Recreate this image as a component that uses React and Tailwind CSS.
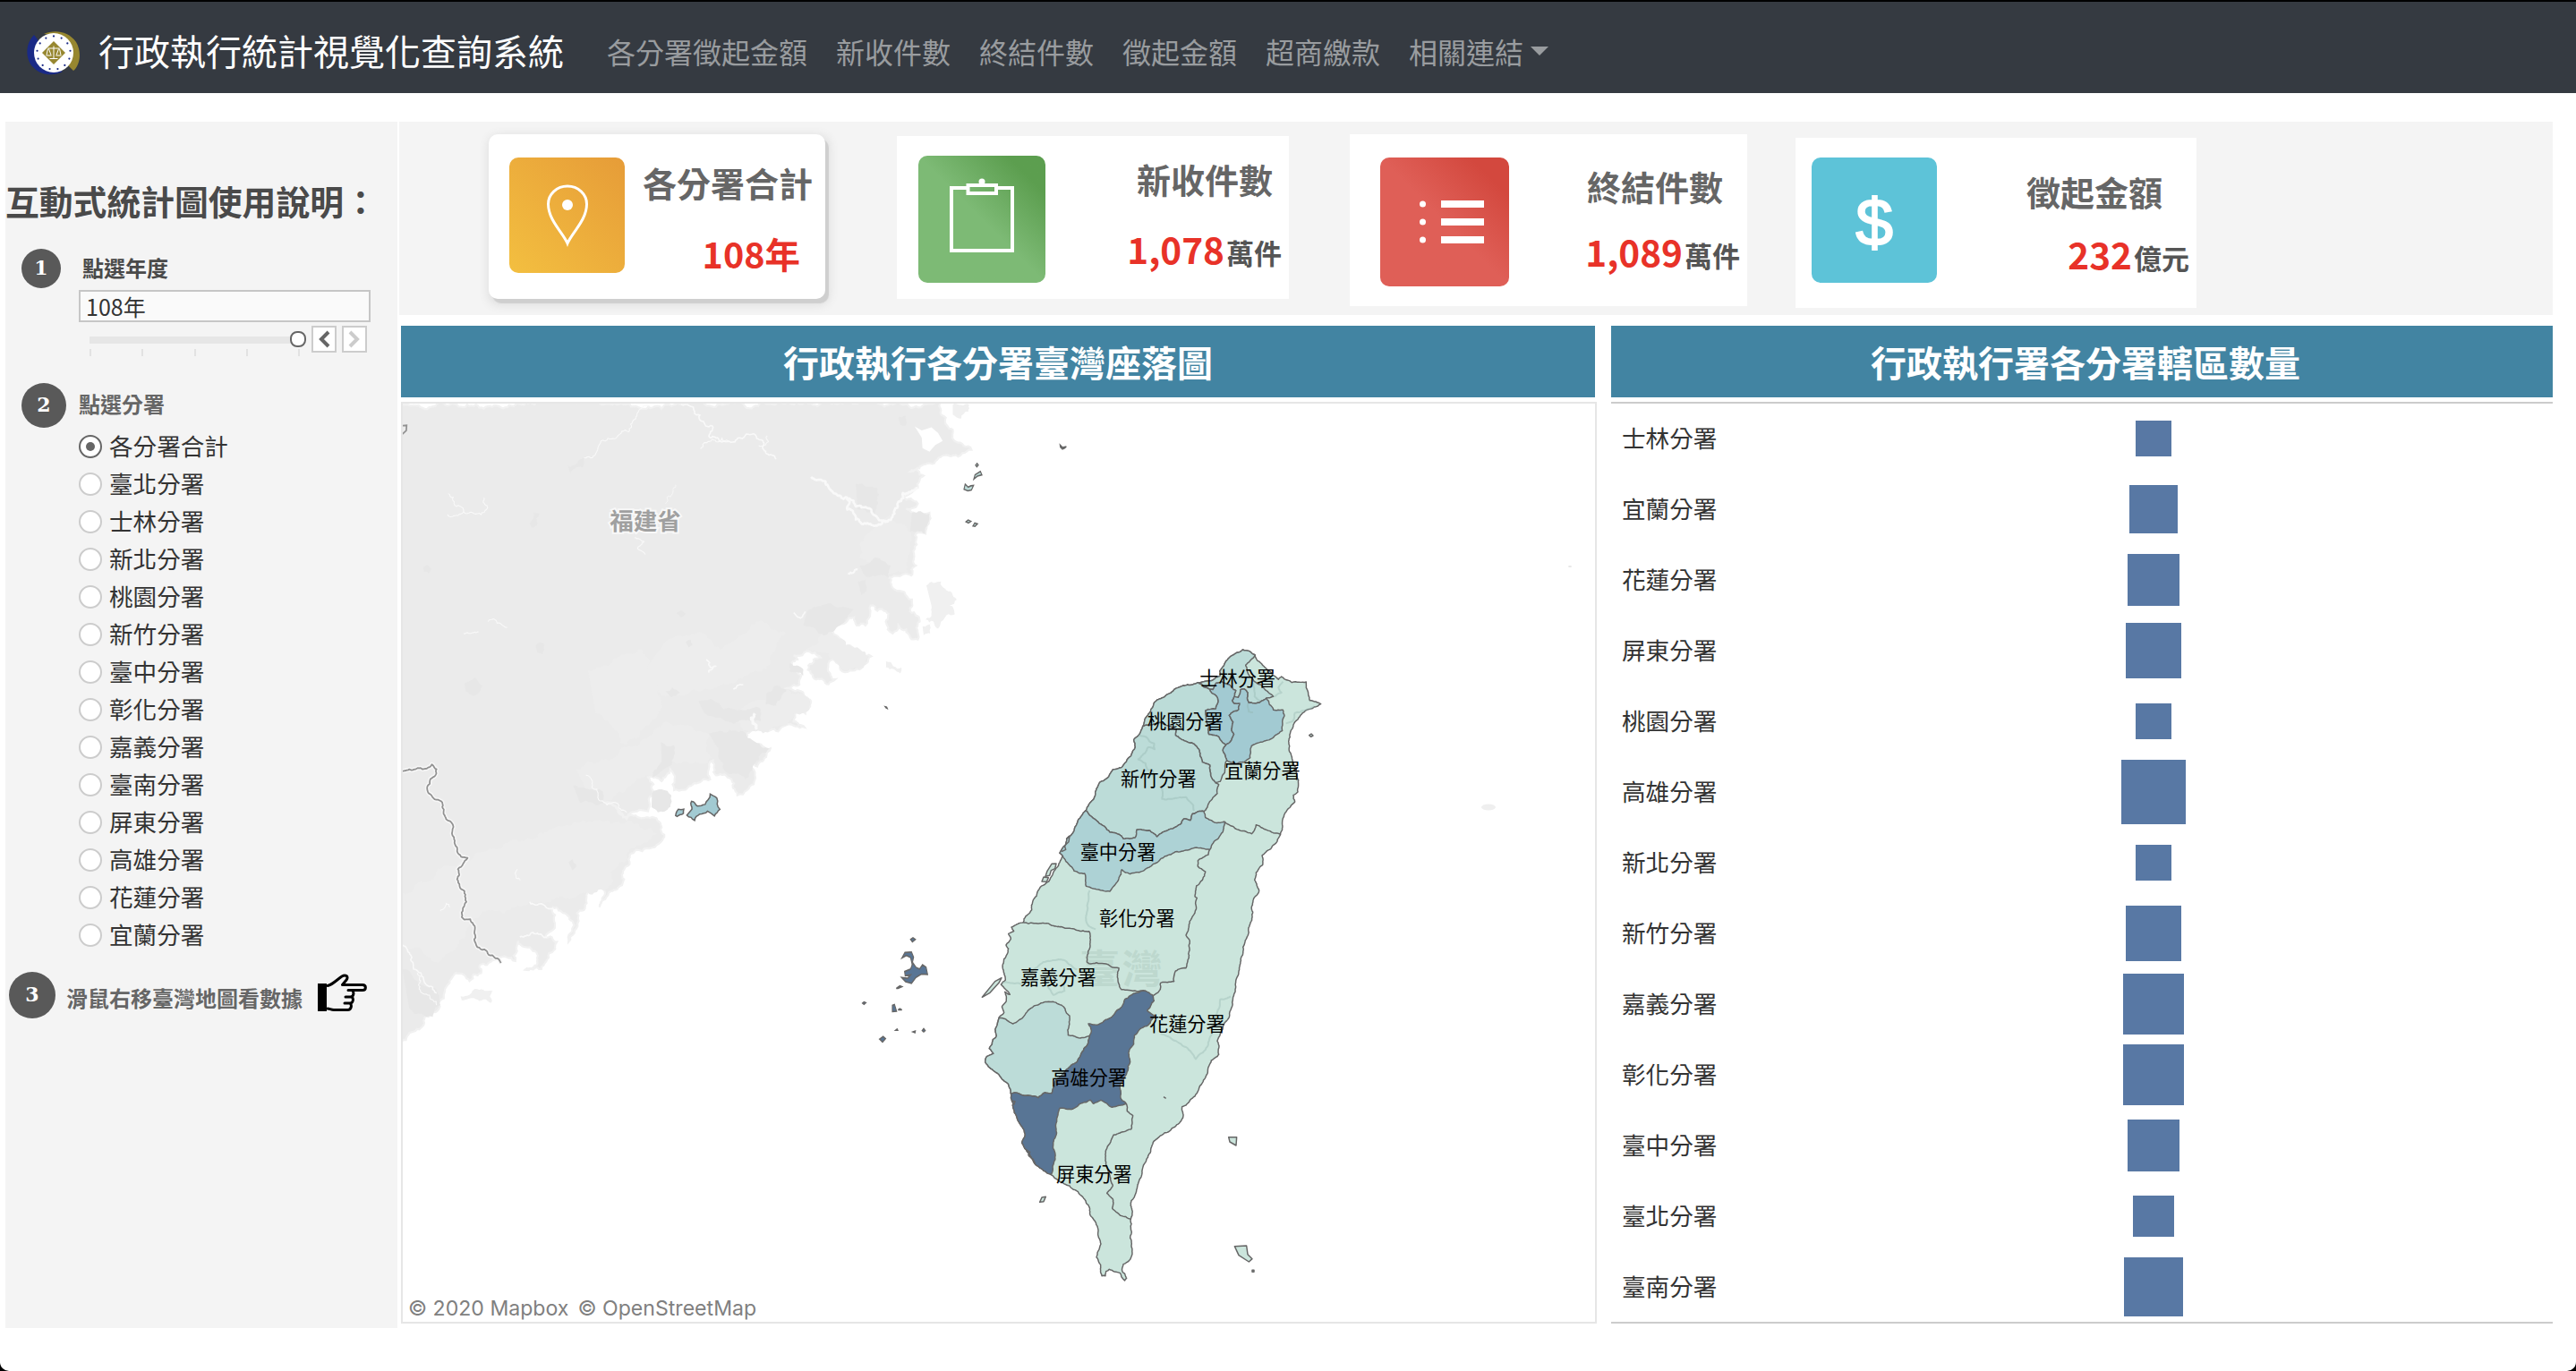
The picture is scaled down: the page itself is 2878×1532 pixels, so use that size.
import React from "react";

/* ---------- geometry helpers ---------- */

const parse = (s) => s.trim().split(/\s+/).map((p) => p.split(",").map(Number));

const hash = (a, b, c, d) => {
  const v = Math.sin(a * 12.9898 + b * 78.233 + c * 37.719 + d * 11.131) * 43758.5453;
  return v - Math.floor(v) - 0.5;
};

// Adds fractal detail to a line. The displacement depends only on the two
// end points, so a border shared by two areas always gets the same shape.
function rough(points, amp = 0.22, min = 7) {
  const out = [points[0]];
  const split = (p, q) => {
    const len = Math.hypot(q[0] - p[0], q[1] - p[1]);
    if (len < min) {
      out.push(q);
      return;
    }
    const flip = p[0] > q[0] || (p[0] === q[0] && p[1] > q[1]);
    const [a, b] = flip ? [q, p] : [p, q];
    const k = hash(a[0], a[1], b[0], b[1]) * amp * Math.min(len, 34);
    const m = [
      (p[0] + q[0]) / 2 - ((b[1] - a[1]) / len) * k,
      (p[1] + q[1]) / 2 + ((b[0] - a[0]) / len) * k,
    ];
    split(p, m);
    split(m, q);
  };
  for (let i = 1; i < points.length; i++) split(points[i - 1], points[i]);
  return out;
}

const toPath = (pts, close) =>
  "M" + pts.map((p) => p[0].toFixed(1) + " " + p[1].toFixed(1)).join("L") + (close ? "Z" : "");

/* ---------- coast and borders of Taiwan ---------- */

const SEG = {
  north: "775,188 800,184 825,180 850,165 848,150 862,132 870,115 885,100 905,88 925,78 948,83 966,95",
  east: "966,95 975,115 992,130 1008,145 1030,165 1045,178 1055,168 1075,180 1090,188 1138,186 1138,205 1145,228 1150,248 1170,252 1187,260 1165,270 1140,280 1110,312 1095,330 1085,355 1079,385 1082,420 1092,450 1105,480 1112,515 1110,555 1095,565 1100,588 1085,605 1066,628 1058,665 1052,697",
  southeast: "1052,697 1040,722 1015,748 990,768 992,800 970,825 965,850 980,885 962,912 955,940 957,975 945,1010 940,1040 926,1075 920,1110 914,1150 902,1190 900,1225 890,1260 880,1310 868,1325 850,1365 840,1390 845,1435 820,1455 808,1495 790,1530 765,1575 745,1595 722,1610 726,1640 713,1665 680,1692 650,1707 628,1725 615,1765 600,1795 585,1845 567,1900 552,1925 550,1987",
  cape: "550,1987 548,2050 553,2070 553,2110 540,2130 525,2138 521,2160 536,2185 530,2193 515,2168 495,2163 478,2155 467,2162 465,2177 453,2177 449,2140 435,2115 440,2095 450,2070 440,2035 434,2005 415,1975 408,1940 380,1905 345,1875 310,1860 283,1838",
  kaoCoast: "283,1838 265,1828 240,1810 215,1780 200,1755 185,1730 196,1705 180,1670 160,1630 148,1565",
  tnnCoast: "148,1565 140,1535 115,1512 80,1482 62,1460 65,1445 90,1432 76,1415 88,1385 100,1372 98,1345 108,1312",
  cyCoast: "108,1312 125,1295 118,1275 132,1258 128,1225 145,1234 115,1200 130,1185 122,1150 125,1115 140,1080 132,1068 148,1048 140,1030 158,1022 150,1008 175,995 190,992",
  chCoast: "190,992 192,980 218,950 222,920 240,885 275,855 300,810 322,770",
  tcCoast: "322,770 312,760 330,735 335,712 360,685 385,635 400,617",
  hcCoast: "400,617 425,580 450,520 475,505 490,480 520,472 550,435 565,405 560,380 580,360 590,335",
  tyCoast: "590,335 605,300 620,275 640,245 690,218 740,195 775,188",
  slEast: "966,95 950,115 935,130 943,158 965,185 985,195 1000,212 1028,235 1005,240",
  slSouth: "1005,240 980,256 945,256 942,222 930,210 918,212 910,238 897,235",
  slWest: "897,235 902,215 888,205 880,195 855,185 836,190 825,212 775,188",
  nw: "897,235 890,248 897,258 915,258 912,278 880,298 893,320 888,345 896,362 880,390 868,398",
  tyNt: "775,188 815,212 838,235 842,255 835,275 800,282 802,305 812,362 845,370 868,398",
  tpEast: "1005,240 1015,262 1028,280 1060,280 1065,300 1058,350 1030,370 1005,382 955,400 950,440 930,455 900,460 872,450",
  tpWest: "868,398 858,415 872,450",
  tyYl: "872,450 865,490 850,520 835,525",
  tyHc: "835,525 818,500 815,465 790,455 780,415 755,390 735,385 700,365 703,345 680,335 650,322 620,330 590,335",
  hcYl: "835,525 845,530 840,560 812,592 795,620",
  hcTc: "795,620 757,628 750,650 728,645 720,660 680,680 638,705 615,685 570,682 565,708 525,712 515,700 480,690 440,655 400,617",
  tcYl: "795,620 800,640 835,658 865,655",
  ylHl: "865,655 905,680 955,695 970,665 1005,682 1052,697",
  tcHl: "865,655 858,690 830,720 815,748",
  tcCh: "815,748 765,742 740,750 700,755 665,770 640,790 615,805 590,820 548,830 520,815 510,845 480,888 430,880 400,870 395,828 360,820 340,795 322,770",
  chHl: "815,748 810,765 775,785 775,805 800,822 790,850 770,870 765,905 772,910 765,960 745,1000 735,1035 748,1055 745,1110 735,1145 700,1155 695,1190 650,1195 645,1222 625,1238",
  chCy: "190,992 205,996 270,995 330,1012 410,1022 415,1050 403,1125 410,1130 460,1130 510,1145 505,1175 518,1217 570,1223 600,1222",
  cyTn: "108,1312 125,1315 155,1332 175,1320 205,1288 250,1262 290,1258 325,1275 345,1305 340,1370 370,1378 412,1372",
  cyKa: "412,1372 418,1355 408,1332 440,1335 490,1305 520,1275 530,1250 570,1228 600,1222",
  tnKa: "412,1372 408,1395 385,1430 370,1460 335,1485 300,1520 285,1565 262,1563 240,1580 200,1573 148,1565",
  kaHl: "600,1222 622,1235 628,1255 605,1288 630,1305 615,1330 590,1345 563,1370 560,1400 545,1420 548,1460 540,1490 512,1540 518,1585 535,1600",
  kaPt: "535,1600 487,1612 450,1588 425,1600 415,1588 385,1598 355,1618 312,1615 302,1660 298,1710 290,1730 297,1770 283,1838",
  ptTt: "535,1600 538,1625 557,1640 552,1685 520,1695 492,1705 470,1750 465,1790 480,1840 490,1875 470,1900 490,1920 488,1950 515,1975 550,1987",
};

const seg = (name) => {
  const rev = name[0] === "-";
  const pts = rough(parse(SEG[rev ? name.slice(1) : name]));
  return rev ? pts.slice().reverse() : pts;
};
const area = (names) => toPath(names.split(" ").flatMap(seg), true);

const ISLAND = area("north east southeast cape kaoCoast tnnCoast cyCoast chCoast tcCoast hcCoast tyCoast");
const REGIONS = [
  ["#bcdcd8", area("north slEast slSouth slWest")],
  ["#a2cad2", area("-slWest nw -tyNt")],
  ["#a2cad2", area("-slSouth tpEast -tpWest -nw")],
  ["#bcdcd8", area("tyCoast tyNt tpWest tyYl tyHc")],
  ["#bcdcd8", area("hcCoast -tyHc hcYl hcTc")],
  ["#add2d5", area("tcCoast -hcTc tcYl tcHl tcCh")],
  ["#bcdcd8", area("tnnCoast cyTn tnKa")],
  ["#587595", area("kaoCoast -tnKa cyKa kaHl kaPt")],
];
const BORDERS = ["ylHl", "chHl", "chCy", "ptTt"].map((n) => toPath(seg(n)));

const FAINT = [
  "575,365 600,370 628,392 630,412 608,405 598,425 575,445 600,460 605,480 625,485 628,510",
  "655,540 655,578 735,572 760,600 762,618",
  "412,885 408,920 400,985 410,1005 432,1015",
  "120,1195 185,1200 225,1150 270,1122 330,1120 370,1150",
  "265,1200 290,1235 328,1222 325,1200",
  "885,1240 850,1250 838,1300 820,1370 800,1420 768,1450 735,1410 690,1385 650,1365",
  "1060,185 1045,205 1055,222 1030,235",
  "1165,268 1100,290 1095,315 1070,325",
  "960,190 965,235 985,250",
  "945,256 945,285 960,288",
].map((s) => toPath(rough(parse(s))));

const ISLETS = [
  "117,1178 95,1190 52,1243 78,1228 108,1195",
  "285,796 300,795 296,812 283,818 278,835 264,838 270,820",
  "258,840 274,842 268,856 252,855",
  "878,1712 905,1712 903,1740 882,1728",
  "898,2078 938,2076 942,2105 957,2120 946,2130 912,2108",
  "245,1930 252,1914 265,1912 258,1928",
  "1148,365 1155,360 1161,366 1154,370",
  "957,2158 963,2158 963,2164 957,2164",
].map((s) => toPath(parse(s), true));

const LABELS = [
  ["士林分署", 908, 175],
  ["桃園分署", 733, 320],
  ["新竹分署", 643, 512],
  ["宜蘭分署", 991, 483],
  ["臺中分署", 507, 757],
  ["彰化分署", 571, 979],
  ["嘉義分署", 307, 1176],
  ["花蓮分署", 739, 1333],
  ["高雄分署", 410, 1513],
  ["屏東分署", 427, 1837],
];

/* ---------- Fujian coast ---------- */

const MAINLAND = toPath(
  rough(
    parse(
      "15,20 1405,20 1422,60 1440,90 1448,120 1488,140 1440,155 1400,165 1360,180 1330,195 1365,205 1350,235 1330,250 1310,262 1350,275 1320,288 1380,298 1378,325 1370,350 1343,354 1340,400 1345,430 1333,455 1275,460 1290,490 1335,515 1330,545 1355,570 1350,615 1330,610 1300,580 1285,600 1268,545 1228,530 1215,580 1192,580 1186,560 1165,572 1125,588 1140,605 1170,630 1185,640 1230,657 1200,690 1150,690 1130,665 1118,690 1137,715 1120,727 1088,715 1068,680 1100,660 1085,648 1030,655 1040,665 1022,690 1050,705 1045,728 1008,738 1050,745 1075,770 1060,800 1035,798 1030,820 1058,835 1010,830 990,845 910,850 905,868 930,880 970,888 950,920 918,930 930,955 910,992 885,1005 870,965 830,955 822,918 815,965 780,975 740,992 722,992 712,940 690,970 655,960 668,1000 655,1045 602,1060 540,1022 600,1064 660,1062 690,1085 688,1122 640,1145 608,1160 590,1200 588,1230 560,1245 530,1285 540,1240 505,1235 497,1275 472,1300 465,1350 450,1372 465,1330 440,1300 410,1285 415,1325 390,1360 420,1372 400,1400 380,1440 338,1442 370,1425 358,1395 320,1370 313,1420 290,1410 250,1422 220,1432 225,1450 195,1470 160,1450 148,1465 130,1500 112,1545 80,1560 60,1590 40,1600 15,1628",
    ),
    0.5,
    8,
  ),
  true,
);

const MAIN_ISLANDS = [
  "1372,480 1410,470 1420,488 1450,515 1432,530 1445,552 1410,570 1402,588 1370,565 1385,530",
  "1268,670 1308,685 1305,700 1268,685",
  "1440,27 1482,27 1480,45 1462,62 1440,52",
  "172,1508 215,1490 255,1495 250,1525 210,1515 175,1518",
  "1362,582 1385,572 1382,600 1365,605",
].map((s) => toPath(rough(parse(s), 0.5, 8), true));

const FRINGE = [
  "1280,300 1335,360 1330,450 1270,455 1200,410 1210,360",
  "1060,640 1120,590 1165,630 1225,657 1198,690 1150,688 1120,650",
  "905,780 1010,740 1070,765 1060,798 1030,800 1010,830 915,848 880,800",
  "700,620 800,600 840,640 940,570 1010,600 960,690 820,740 700,760 640,700",
  "470,940 620,880 700,820 810,850 820,910 700,930 640,960 560,1020 500,1000",
  "22,1250 130,1180 300,1120 450,1080 600,1070 680,1100 600,1150 560,1230 470,1260 380,1270 220,1310 120,1420 22,1380",
  "500,690 640,640 690,780 600,880 520,800",
].map((s) => toPath(rough(parse(s), 0.5, 8), true));

const TOWNS = [
  "1190,225 1245,235 1240,300 1195,290",
  "1335,298 1380,300 1368,350 1330,345",
  "1200,430 1240,410 1280,430 1275,460 1210,450",
  "1065,545 1130,528 1185,540 1150,580 1110,605 1055,580",
  "960,750 985,730 1012,745 985,780 958,778",
  "785,770 820,765 850,790 940,785 945,820 880,825 800,800",
  "812,850 900,845 968,888 930,925 905,965 850,940 830,880",
  "688,872 722,880 715,930 665,960 690,920",
  "462,980 530,990 540,1025 480,1025",
  "665,1000 690,990 715,1005 712,1035 680,1048 664,1035",
  "448,180 490,158 485,185 455,200",
  "182,725 208,710 228,730 215,752 185,745",
  "350,325 360,298 375,300 370,325 355,335",
  "75,435 85,428 97,438 90,450 78,446",
  "365,630 375,622 388,628 384,652 370,648",
  "728,548 740,542 752,550 740,560",
  "752,622 765,616 770,628 760,635",
  "450,1172 460,1165 470,1180 460,1193",
  "700,745 718,735 738,748 715,760",
  "1195,470 1215,465 1218,490 1205,505",
  "1020,675 1055,690 1055,705 1020,695",
  "1300,60 1318,55 1318,80 1305,78",
  "22,1440 60,1470 110,1490 120,1530 100,1560 40,1540",
].map((s) => toPath(rough(parse(s), 0.4, 8), true));

const RIVERS = [
  ["490,160 520,150 528,130 545,118 575,108 605,95 615,70 630,45 660,30", 2],
  ["740,27 775,45 820,80 815,110 860,120 905,105 935,112 960,150 985,163", 3],
  ["790,138 830,120 862,118", 2],
  ["940,130 965,120 962,105", 2],
  ["1075,208 1100,215 1130,245 1170,262 1190,282 1230,290 1262,318 1290,300 1300,270 1335,242 1350,235", 5],
  ["1165,262 1168,290 1190,315 1245,330 1275,318", 5],
  ["140,250 155,275 180,295 215,300 240,280 232,260", 2],
  ["138,302 165,305 180,295", 2],
  ["180,600 205,598 218,596", 2],
  ["243,570 262,566 275,575 292,585", 2],
  ["620,360 645,370 630,390 648,402", 2],
  ["700,275 718,250 726,228", 1.5],
  ["805,665 815,685 830,682 812,698", 3],
  ["875,740 885,730 900,728", 3],
  ["1030,548 1045,560 1060,545", 3],
  ["495,955 510,985 540,1022 580,1030 600,1048", 2],
  ["350,1272 390,1282 412,1290", 3],
  ["22,1380 45,1420 70,1450 110,1500", 3],
  ["60,1450 65,1490 110,1530", 2],
  ["120,1295 135,1275 145,1285", 2],
  ["318,1190 315,1212 325,1218", 2],
  ["325,1360 350,1355 370,1350 395,1360", 3],
  ["1170,450 1195,440", 4],
  ["930,800 925,825 935,840", 6],
].map(([s, w]) => [toPath(rough(parse(s), 0.6, 6)), w]);

const PROVINCE = toPath(
  rough(
    parse(
      "15,948 40,940 85,938 98,928 110,940 98,962 86,990 105,1015 122,1020 128,1048 145,1070 155,1110 163,1145 190,1162 165,1190 163,1215 182,1245 182,1280 175,1310 197,1315 208,1345 215,1385 245,1405 272,1418 276,1425",
    ),
    0.4,
    6,
  ),
);

const KINMEN = [
  "755,1055 775,1068 788,1052 808,1045 826,1057 840,1040 832,1012 815,1002 802,1028 782,1032 767,1020 768,1040",
  "726,1056 733,1040 747,1040 746,1050 730,1058",
].map((s) => toPath(rough(parse(s), 0.3, 8), true));

const PENGHU = [
  "232,1292 240,1288 248,1292 238,1298",
  "203,1336 213,1323 235,1322 242,1334 237,1350 232,1335 218,1330",
  "212,1368 232,1362 240,1348 250,1358 262,1362 272,1352 284,1358 289,1375 268,1374 250,1382 235,1396 215,1392 202,1382 222,1384 232,1376 214,1378",
  "184,1408 196,1402 203,1404 190,1408",
  "171,1463 171,1448 178,1446 185,1462",
  "190,1459 196,1456 203,1459",
  "71,1443 76,1440 82,1442 76,1446",
  "128,1528 140,1522 148,1527 138,1535",
  "182,1507 187,1504 189,1507",
  "240,1511 248,1509 247,1513",
  "271,1508 276,1503 281,1508 276,1511",
].map((s) => toPath(parse(s), true));

const MATSU = [
  "411,226 415,214 425,221 434,218 443,217 436,228 424,230",
  "444,202 448,192 466,184 471,192 456,195",
  "450,169 455,165 459,169 454,173",
  "418,303 425,299 434,302 426,306",
  "441,313 447,306 456,308 448,314",
  "733,121 741,127 754,125 748,129 741,131 734,126",
  "147,741 152,742 154,745 150,744",
].map((s) => toPath(parse(s), true));

const cjk = "font-['Noto_Sans_CJK_TC',sans-serif]";

function TaiwanMap() {
  return (
    <svg viewBox="450 451 1332 1026" className="block h-[1026px] w-[1332px]">
      <g transform="translate(440 440) scale(0.43367 0.44643)">
        <path d={MAINLAND} fill="#ebebeb" stroke="#f1f1f1" strokeWidth="5" />
        {MAIN_ISLANDS.map((d, i) => (
          <path key={i} d={d} fill="#f0f0f0" />
        ))}
        {FRINGE.map((d, i) => (
          <path key={i} d={d} fill="#ededed" />
        ))}
        {TOWNS.map((d, i) => (
          <path key={i} d={d} fill="#e7e7e7" />
        ))}
        <path d="M1342 82L1360 92L1385 84L1402 98L1414 118L1395 128L1380 145L1362 136L1360 110Z" fill="#fff" />
        <g fill="none" stroke="#f9f9f9" strokeLinejoin="round">
          {RIVERS.map(([d, w], i) => (
            <path key={i} d={d} strokeWidth={w * 1.2} />
          ))}
        </g>
        <path d={PROVINCE} fill="none" stroke="#f7f7f7" strokeWidth="11" strokeLinejoin="round" />
        <path d={PROVINCE} fill="none" stroke="#919191" strokeWidth="4" strokeLinejoin="round" />
        <path d="M20 80L33 79L32 92L22 101" fill="none" stroke="#919191" strokeWidth="4" />
        {KINMEN.map((d, i) => (
          <path key={i} d={d} fill="#a2cad2" stroke="#666" strokeWidth="3.5" />
        ))}
      </g>
      <g transform="translate(940 440) scale(0.33333 0.47194)" stroke="#666" strokeWidth="3.4">
        {PENGHU.map((d, i) => (
          <path key={i} d={d} fill="#587595" />
        ))}
        {MATSU.map((d, i) => (
          <path key={i} d={d} fill="#bcdcd8" />
        ))}
      </g>
      <ellipse cx="1663" cy="902" rx="8" ry="3.5" fill="#efefef" />
      <ellipse cx="1754" cy="633" rx="2" ry="1" fill="#e6e6e6" />
      <text
        x="721"
        y="592"
        textAnchor="middle"
        fontSize="26.5"
        fontWeight="700"
        fill="#a0a0a0"
        stroke="#f8f8f8"
        strokeWidth="4"
        paintOrder="stroke"
        className={cjk}
      >
        福建省
      </text>
      <g transform="translate(1080 700) scale(0.33333)" strokeLinejoin="round">
        <path d={ISLAND} fill="#cbe5dc" stroke="#666" strokeWidth="4.4" />
        {REGIONS.map(([fill, d], i) => (
          <path key={i} d={d} fill={fill} stroke="#666" strokeWidth="4.4" />
        ))}
        <g fill="none" stroke="#8fb3ac" strokeOpacity="0.35" strokeWidth="6">
          {FAINT.map((d, i) => (
            <path key={i} d={d} />
          ))}
        </g>
        <text x="379" y="1196" fontSize="134" fontWeight="700" letterSpacing="8" fill="#bdd8ce" className={cjk}>
          臺灣
        </text>
        <g fill="none" stroke="#666" strokeWidth="4.4">
          {BORDERS.map((d, i) => (
            <path key={i} d={d} />
          ))}
          <path d="M335 712L345 702L342 722L328 735L332 748L318 755M200 1755L212 1762L208 1775L222 1785L230 1800M205 1770L218 1780M150 1590L162 1592L158 1604M660 1577L668 1582" />
        </g>
        {ISLETS.map((d, i) => (
          <path key={i} d={d} fill="#cbe5dc" stroke="#666" strokeWidth="4.4" />
        ))}
        <g fontSize="63.5" textAnchor="middle" fill="#000" className={cjk}>
          {LABELS.map(([t, x, y]) => (
            <text key={t} x={x} y={y + 23}>
              {t}
            </text>
          ))}
        </g>
      </g>
    </svg>
  );
}

/* ---------- icons ---------- */

function Emblem() {
  const dots = Array.from({ length: 13 }, (_, i) => {
    const a = (i / 13) * Math.PI * 2 - Math.PI / 2;
    return [30 + Math.cos(a) * 18.6, 24 + Math.sin(a) * 18.6];
  });
  return (
    <svg viewBox="0 0 60 49" className="h-[49px] w-[60px]">
      <path d="M8 4C-2 14 -2 31 7 40C16 50 30 50 40 45L20 36L12 9Z" fill="#1a2a86" />
      <path d="M19 3C30 -2 46 -1 55 12C62 24 59 38 52 44L46 38L34 4Z" fill="#978730" />
      <circle cx="30" cy="24" r="22" fill="#fff" />
      {dots.map(([x, y], i) => (
        <circle key={i} cx={x} cy={y} r="1.1" fill="#1a2a86" />
      ))}
      <path d="M30 11L43 24L30 37L17 24Z" fill="#978730" />
      <path
        d="M30 16.5V30M25.500 30.500H34.500M23.500 19H36.500M23.500 19.500L22 26.500M24.500 19.500L27 26.500M35.500 19.500L33 26.500M36.500 19.500L38 26.500M21.500 27H27.500M32.500 27H38.500"
        fill="none"
        stroke="#fff"
        strokeWidth="1"
      />
    </svg>
  );
}

function PinIcon() {
  return (
    <svg viewBox="0 0 129 129" className="h-full w-full" fill="none" stroke="#fff" strokeWidth="3">
      <path d="M65 96C60 84 43.500 70 43.500 52A21.500 20 0 0 1 86.500 52C86.500 70 70 84 65 96Z" />
      <circle cx="65" cy="53" r="6" fill="#fff" stroke="none" />
    </svg>
  );
}

function ClipboardIcon() {
  return (
    <svg viewBox="0 0 142 142" className="h-full w-full" fill="none" stroke="#fff" strokeWidth="4">
      <path d="M54 36H37V106H105V36H88" />
      <path d="M55.500 33H87V42H55.500Z" />
      <circle cx="71" cy="29" r="3.500" fill="#fff" stroke="none" />
    </svg>
  );
}

function ListIcon() {
  return (
    <svg viewBox="0 0 144 144" className="h-full w-full" fill="#fff">
      {[52, 72, 92].map((y) => (
        <g key={y}>
          <circle cx="47.500" cy={y} r="3.500" />
          <rect x="68" y={y - 4} width="48" height="8" />
        </g>
      ))}
    </svg>
  );
}

function HandIcon() {
  return (
    <svg viewBox="0 0 56 43" className="h-[43px] w-[56px]">
      <rect x="0" y="11" width="10" height="31" fill="#000" />
      <path
        d="M11 13.500C17 12 21 7 27 3C31 0.500 35 3 32 7L27.500 12.500H50C54.500 12.500 54.500 18.500 50 18.500H34M38 18.500C41 20 40.500 26 36.500 26H31M38 26C40.500 28 39.500 33 36 33H30M36 33C38.500 35 37.500 40.500 33.500 40.500H18C15 40.500 13 39 11 39"
        fill="#f4f4f4"
        stroke="#000"
        strokeWidth="3"
        strokeLinejoin="round"
        strokeLinecap="round"
      />
    </svg>
  );
}

/* ---------- page data ---------- */

const NAV = ["各分署徵起金額", "新收件數", "終結件數", "徵起金額", "超商繳款"];

const OFFICES = [
  "各分署合計",
  "臺北分署",
  "士林分署",
  "新北分署",
  "桃園分署",
  "新竹分署",
  "臺中分署",
  "彰化分署",
  "嘉義分署",
  "臺南分署",
  "屏東分署",
  "高雄分署",
  "花蓮分署",
  "宜蘭分署",
];

const ROWS = [
  ["士林分署", 40],
  ["宜蘭分署", 54],
  ["花蓮分署", 58],
  ["屏東分署", 62],
  ["桃園分署", 40],
  ["高雄分署", 72],
  ["新北分署", 40],
  ["新竹分署", 62],
  ["嘉義分署", 68],
  ["彰化分署", 68],
  ["臺中分署", 58],
  ["臺北分署", 46],
  ["臺南分署", 66],
];

/* ---------- page parts ---------- */

function Step({ n, className }) {
  return (
    <div
      className={`flex shrink-0 items-center justify-center rounded-full bg-[#595959] pb-[2px] font-['DejaVu_Serif',serif] text-[22px] leading-none font-bold text-white ${className}`}
    >
      {n}
    </div>
  );
}

function Stat({ title, value, unit, icon, card, tile, titleCls, valueCls }) {
  return (
    <div className={`flex shrink-0 justify-between bg-white ${card}`}>
      <div className={`shrink-0 overflow-hidden rounded-[10px] ${tile}`}>{icon}</div>
      <div className="flex flex-col items-end whitespace-nowrap">
        <div className={`text-[38px] leading-[40px] font-bold text-[#666] ${titleCls}`}>{title}</div>
        <div className={`flex items-baseline leading-[44px] font-bold text-[#e83228] ${valueCls}`}>
          {value}
          {unit && <span className="ml-[2px] text-[31px] font-bold text-[#555]">{unit}</span>}
        </div>
      </div>
    </div>
  );
}

function Sidebar() {
  return (
    <aside className="h-[1348px] w-[438px] shrink-0 bg-[#f4f4f4] pt-[68px]">
      <h2 className="text-[37.800px] leading-[40px] font-bold whitespace-nowrap text-[#4a4a4a]">
        互動式統計圖使用說明：
      </h2>

      <div className="mt-[34px] ml-[18px] flex h-[44px] items-center">
        <Step n="1" className="h-[44px] w-[44px]" />
        <span className="-mt-[3px] ml-[24px] text-[24px] leading-none font-bold text-[#4a4a4a]">點選年度</span>
      </div>

      <div className="mt-[2px] ml-[82px] flex h-[36px] w-[326px] items-center border-2 border-[#c6c6c6] bg-[#fafafa] pl-[6px] text-[25px] leading-none text-[#333]">
        108年
      </div>
      <div className="mt-[4px] ml-[94px] flex h-[34px]">
        <div className="relative w-[248px]">
          <div className="mt-[12px] h-[8px] w-[233px] bg-[#e6e6e6]" />
          <div className="mt-[6px] flex w-[235px] justify-between">
            {[0, 1, 2, 3, 4].map((i) => (
              <div key={i} className="h-[8px] w-[2px] bg-[#e2e2e2]" />
            ))}
          </div>
          <div className="absolute top-[6px] left-[224px] h-[18px] w-[18px] rounded-[8px] border-2 border-[#666] bg-white" />
        </div>
        {["#666", "#ccc"].map((c, i) => (
          <div
            key={c}
            className="mr-[6px] flex h-[30px] w-[28px] items-center justify-center border-2 border-[#ccc] bg-white"
          >
            <svg viewBox="0 0 14 20" className="h-[20px] w-[14px]">
              <path
                d={i === 0 ? "M12 2L4 10L12 18" : "M2 2L10 10L2 18"}
                fill="none"
                stroke={c}
                strokeWidth="4"
              />
            </svg>
          </div>
        ))}
      </div>

      <div className="mt-[30px] ml-[18px] flex h-[50px] items-center">
        <Step n="2" className="h-[50px] w-[50px]" />
        <span className="-mt-[4px] ml-[14px] text-[24px] leading-none font-bold text-[#666]">點選分署</span>
      </div>

      <ul className="ml-[82px]">
        {OFFICES.map((name, i) => (
          <li key={name} className="flex h-[42px] items-center">
            <span
              className={`flex h-[26px] w-[26px] items-center justify-center rounded-full border-2 bg-white ${
                i === 0 ? "border-[#666]" : "border-[#ccc]"
              }`}
            >
              {i === 0 && <span className="h-[10px] w-[10px] rounded-full bg-[#666]" />}
            </span>
            <span className="-mt-[2px] ml-[8px] text-[26.600px] leading-none text-[#333]">{name}</span>
          </li>
        ))}
      </ul>

      <div className="mt-[20px] ml-[4px] flex h-[52px] items-center">
        <Step n="3" className="h-[52px] w-[52px]" />
        <span className="mt-[5px] ml-[12px] text-[24px] leading-none font-bold whitespace-nowrap text-[#666]">
          滑鼠右移臺灣地圖看數據
        </span>
        <span className="-mt-[6px] ml-[17px]">
          <HandIcon />
        </span>
      </div>
    </aside>
  );
}

function PanelTitle({ children, className }) {
  return (
    <h3
      className={`flex h-[80px] items-center justify-center bg-[#4284a2] text-[40px] leading-none font-bold text-white ${className}`}
    >
      {children}
    </h3>
  );
}

export default function App() {
  return (
    <div className="h-[1532px] w-[2878px] bg-black font-['Noto_Sans_CJK_TC',sans-serif]">
      <div className="h-full w-full overflow-hidden rounded-b-[10px] bg-white">
        <header className="flex h-[104px] items-center border-t-2 border-black bg-[#353a41] pt-[12px] pl-[30px]">
          <Emblem />
          <h1 className="-mt-[6px] ml-[20px] text-[40px] leading-[60px] whitespace-nowrap text-white">
            行政執行統計視覺化查詢系統
          </h1>
          <nav className="-mt-[5px] ml-[48px] flex gap-[32px] text-[32px] leading-[48px] whitespace-nowrap text-[#999c9f]">
            {NAV.map((t) => (
              <span key={t}>{t}</span>
            ))}
            <span className="flex items-center">
              相關連結
              <svg viewBox="0 0 20 10" className="mt-px ml-[8px] h-[10px] w-[20px]">
                <path d="M0 0H20L10 10Z" fill="#999c9f" />
              </svg>
            </span>
          </nav>
        </header>

        <main className="mt-[32px] flex gap-[2px] pl-[6px]">
          <Sidebar />

          <div className="w-[2406px] shrink-0">
            <section className="flex h-[216px] items-start bg-[#f4f4f4]">
              <Stat
                title="各分署合計"
                value="108年"
                icon={<PinIcon />}
                card="mt-[14px] ml-[100px] h-[184px] w-[376px] rounded-[10px] shadow-[4px_5px_1px_#cfcfcf,2px_4px_10px_4px_#e2e2e2] pl-[23px] pr-[14px]"
                tile="mt-[26px] h-[129px] w-[129px] bg-linear-to-tr from-[#f3bf40] to-[#e69c38]"
                titleCls="mt-[34px]"
                valueCls="mt-[37px] mr-[14px] text-[39.500px]"
              />
              <Stat
                title="新收件數"
                value="1,078"
                unit="萬件"
                icon={<ClipboardIcon />}
                card="mt-[16px] ml-[80px] h-[182px] w-[438px] pl-[24px] pr-[8px]"
                tile="mt-[22px] h-[142px] w-[142px] bg-linear-to-tr from-[#7dba75] from-50% to-[#5c9e4f] to-85%"
                titleCls="mt-[28px] mr-[10px]"
                valueCls="mt-[36px] text-[40.500px]"
              />
              <Stat
                title="終結件數"
                value="1,089"
                unit="萬件"
                icon={<ListIcon />}
                card="mt-[14px] ml-[68px] h-[192px] w-[444px] pl-[34px] pr-[8px]"
                tile="mt-[26px] h-[144px] w-[144px] bg-linear-to-tr from-[#df5f57] from-50% to-[#d3483e] to-85%"
                titleCls="mt-[38px] mr-[19px]"
                valueCls="mt-[31px] text-[40.500px]"
              />
              <Stat
                title="徵起金額"
                value="232"
                unit="億元"
                icon={
                  <div className="flex h-full w-full items-center justify-center pt-[4px] font-['Liberation_Sans',sans-serif] text-[75px] leading-none text-white [-webkit-text-stroke:2px_white]">
                    $
                  </div>
                }
                card="mt-[18px] ml-[54px] h-[190px] w-[448px] pl-[18px] pr-[8px]"
                tile="mt-[22px] h-[140px] w-[140px] bg-[#5dc3d8]"
                titleCls="mt-[40px] mr-[30px]"
                valueCls="mt-[28px] text-[40.500px]"
              />
            </section>

            <div className="mt-[12px] flex gap-[18px] pl-[2px]">
              <section className="w-[1334px] shrink-0">
                <PanelTitle>行政執行各分署臺灣座落圖</PanelTitle>
                <div className="relative mt-[5px] h-[1030px] w-[1336px] border-2 border-[#e6e6e6]">
                  <TaiwanMap />
                  <div className="absolute -bottom-px left-[6px] flex gap-[10px] font-['Inter',sans-serif] text-[23.100px] leading-[32px] whitespace-nowrap text-[#808080]">
                    <span>© 2020 Mapbox</span>
                    <span>© OpenStreetMap</span>
                  </div>
                </div>
              </section>

              <section className="w-[1052px] shrink-0">
                <PanelTitle className="pl-[8px]">行政執行署各分署轄區數量</PanelTitle>
                <ul className="mt-[5px] h-[1030px] border-y-2 border-[#ccc]">
                  {ROWS.map(([name, size]) => (
                    <li key={name} className="flex h-[79px] items-center pl-[12px]">
                      <span className="-mt-[2px] w-[200px] text-[26.600px] leading-none text-[#333]">{name}</span>
                      <span className="-mt-px flex w-[788px] justify-center">
                        <span className="bg-[#5878a4]" style={{ width: size, height: size }} />
                      </span>
                    </li>
                  ))}
                </ul>
              </section>
            </div>
          </div>
        </main>
      </div>
    </div>
  );
}
